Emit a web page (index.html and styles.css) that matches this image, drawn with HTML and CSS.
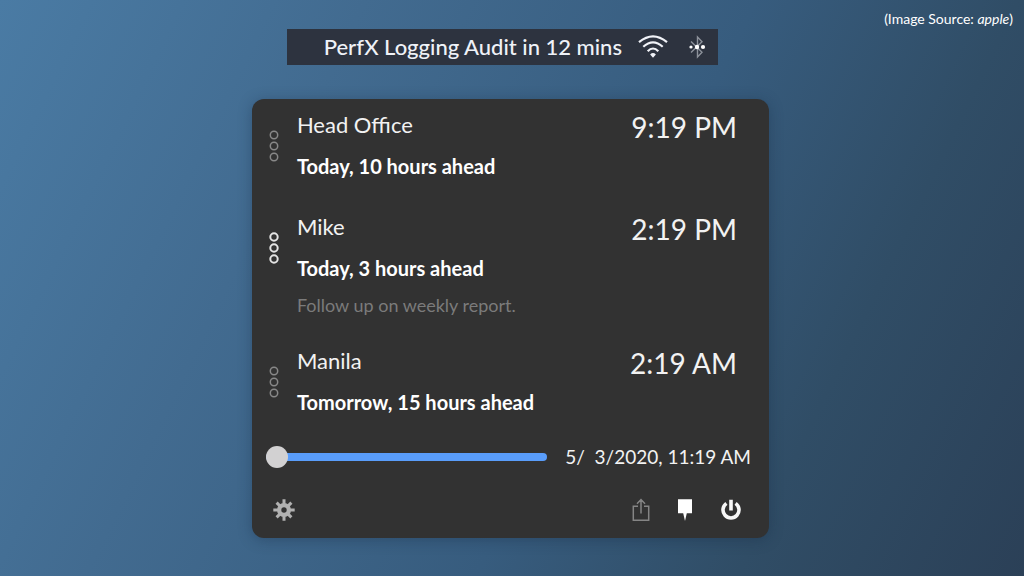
FILE: index.html
```html
<!DOCTYPE html>
<html lang="en">
<head>
<meta charset="utf-8">
<title>World clock</title>
<link rel="stylesheet" href="styles.css">
</head>
<body>
<header class="credit">(Image Source: <em>apple</em>)</header>
<main class="stage">
  <div class="menubar">
    <span class="menubar-title">PerfX Logging Audit in 12 mins</span>
    <svg class="wifi" viewBox="0 0 30 24" width="30" height="24" aria-label="Wi-Fi" role="img">
      <g fill="none" stroke="#f1f3f8" stroke-width="2.2">
        <path d="M1 7.2Q15-4.4 29 7.2"/>
        <path d="M5.3 11.8Q15 2.8 24.7 11.8"/>
        <path d="M9.7 16.2Q15 10.8 20.3 16.2"/>
      </g>
      <path fill="#f1f3f8" d="M12.1 19.4Q15 16.6 17.9 19.4L15 22.8Z"/>
    </svg>
    <svg class="bluetooth" viewBox="0 0 18 24" width="18" height="24" aria-label="Bluetooth" role="img">
      <path d="M3 6.5L14 17.2L9.5 22V2L14 6.8L3 17.5" fill="none" stroke="#8d929b" stroke-width="1.4"/>
      <g fill="#fff"><circle cx="3" cy="12" r="1.6"/><circle cx="9" cy="12" r="2.2"/><circle cx="15" cy="12" r="2.1"/></g>
    </svg>
  </div>
  <section class="panel">
    <ul class="clocks">
      <li class="clock">
        <svg class="grip" viewBox="0 0 10 32" width="10" height="32" aria-hidden="true"><circle cx="5" cy="5" r="3.7"/><circle cx="5" cy="16" r="3.7"/><circle cx="5" cy="27" r="3.7"/></svg>
        <div class="place">
          <h2 class="name">Head Office</h2>
          <p class="offset">Today, 10 hours ahead</p>
        </div>
        <time class="time">9:19 PM</time>
      </li>
      <li class="clock">
        <svg class="grip grip-active" viewBox="0 0 10 32" width="10" height="32" aria-hidden="true"><circle cx="5" cy="5" r="3.7"/><circle cx="5" cy="16" r="3.7"/><circle cx="5" cy="27" r="3.7"/></svg>
        <div class="place">
          <h2 class="name">Mike</h2>
          <p class="offset">Today, 3 hours ahead</p>
          <p class="note">Follow up on weekly report.</p>
        </div>
        <time class="time">2:19 PM</time>
      </li>
      <li class="clock">
        <svg class="grip" viewBox="0 0 10 32" width="10" height="32" aria-hidden="true"><circle cx="5" cy="5" r="3.7"/><circle cx="5" cy="16" r="3.7"/><circle cx="5" cy="27" r="3.7"/></svg>
        <div class="place">
          <h2 class="name">Manila</h2>
          <p class="offset">Tomorrow, 15 hours ahead</p>
        </div>
        <time class="time">2:19 AM</time>
      </li>
    </ul>
    <div class="scrubber">
      <input class="slider" id="shift" type="range" min="0" max="100" value="0">
      <label class="date" for="shift">5/  3/2020, 11:19 AM</label>
    </div>
    <footer class="tools">
      <button class="tool tool-settings" type="button" aria-label="Settings">
        <svg viewBox="0 0 24 24" width="24" height="24">
          <g stroke="#b1b1b1" stroke-width="3"><path d="M12 1.3V22.7M1.3 12H22.7M4.6 4.6L19.4 19.4M19.4 4.6L4.6 19.4"/></g>
          <circle cx="12" cy="12" r="7" fill="#b1b1b1"/><circle cx="12" cy="12" r="2.7" fill="#323232"/>
        </svg>
      </button>
      <button class="tool" type="button" aria-label="Share">
        <svg viewBox="0 0 24 24" width="24" height="24"><path d="M9 8.2H4.3V22.2H19.7V8.2H15M12 15.5V2M8 5.8L12 1.6L16 5.8" fill="none" stroke="#858585" stroke-width="1.5"/></svg>
      </button>
      <button class="tool" type="button" aria-label="Pin">
        <svg viewBox="0 0 24 24" width="24" height="24"><path d="M4 1.3H18V15.3H12.8L11 23L9.2 15.3H4Z" fill="#fff"/></svg>
      </button>
      <button class="tool" type="button" aria-label="Quit">
        <svg viewBox="0 0 24 24" width="24" height="24"><path d="M7.4 5.4A8 8 0 1 0 16.6 5.4M12 1.8V12.5" fill="none" stroke="#f7f7f7" stroke-width="3.6"/></svg>
      </button>
    </footer>
  </section>
</main>
</body>
</html>
```
FILE: styles.css
```css
* { box-sizing: border-box; }

body {
  margin: 0;
  min-height: 100vh;
  font-family: Lato, "Open Sans", sans-serif;
  color: #f2f2f2;
  background: linear-gradient(116deg, #4a7ba4 0%, #426b90 28%, #375c7e 58%, #304d66 78%, #2b4057 100%);
}

.credit {
  padding: 9px 11px 0 0;
  height: 29px;
  font-size: 14px;
  line-height: 20px;
  text-align: right;
  color: #fff;
}

.stage {
  width: 50.5%;
  min-width: 500px;
  margin-left: 24.6%;
}

.menubar {
  display: flex;
  align-items: center;
  justify-content: flex-end;
  gap: 16px;
  height: 36px;
  margin: 0 51px 34px 35px;
  padding-right: 12px;
  background: #2d333f;
}

.menubar-title {
  font-size: 22px;
  font-weight: 500;
  line-height: 28px;
  white-space: nowrap;
  color: #eff2f8;
}

.wifi, .bluetooth, .grip { flex: none; }
.bluetooth { margin-left: 4px; }

.panel {
  padding: 12px 18px 16px 14px;
  border-radius: 12px;
  background: #323232;
  box-shadow: 0 2px 14px rgba(20, 40, 65, 0.35);
}

.clocks {
  display: flex;
  flex-direction: column;
  gap: 34px;
  margin: 0;
  padding: 0 14px 0 3px;
  list-style: none;
}

.clock {
  display: flex;
  align-items: flex-start;
}

.grip {
  margin: 19px 18px 0 0;
  fill: none;
  stroke: #888;
  stroke-width: 1.5;
}

.grip-active {
  stroke: #e4e4e4;
  stroke-width: 2;
}

.place { flex: 1; }

.name {
  margin: 0 0 14px;
  font-size: 22px;
  font-weight: 400;
  line-height: 28px;
}

.offset {
  margin: 0;
  font-size: 20px;
  font-weight: 700;
  line-height: 26px;
  color: #fff;
}

.note {
  margin: 16px 0 0;
  font-size: 18px;
  line-height: 16px;
  color: #7b7b7b;
}

.time {
  font-size: 28px;
  line-height: 32px;
}

.scrubber {
  display: flex;
  align-items: center;
  gap: 18px;
  margin-top: 28px;
}

.slider {
  flex: 1;
  min-width: 0;
  height: 22px;
  margin: 0;
  appearance: none;
  background: none;
}

.slider::-webkit-slider-runnable-track {
  height: 8px;
  border-radius: 4px;
  background: #599dfb;
}

.slider::-webkit-slider-thumb {
  appearance: none;
  width: 22px;
  height: 22px;
  margin-top: -7px;
  border-radius: 50%;
  background: #d2d1d2;
}

.date {
  font-size: 19px;
  line-height: 28px;
  white-space: pre;
}

.tools {
  display: flex;
  align-items: center;
  gap: 21px;
  margin-top: 27px;
  padding: 0 8px 0 6px;
}

.tool {
  display: flex;
  padding: 0;
  border: 0;
  background: none;
}

.tool-settings { margin-right: auto; }
```
